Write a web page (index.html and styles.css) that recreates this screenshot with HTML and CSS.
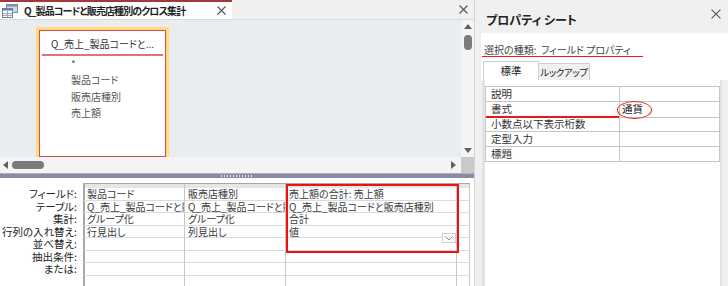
FILE: index.html
```html
<!DOCTYPE html>
<html lang="ja">
<head>
<meta charset="utf-8">
<title>クロス集計</title>
<link rel="stylesheet" href="styles.css">
</head>
<body>
<div class="app">
  <div class="left">
    <div class="tabbar">
      <div class="tab">
        <svg class="qicon" viewBox="0 0 16 14" width="16" height="14">
          <rect x="4.5" y="0.5" width="11" height="8" fill="#c9d5e2" stroke="#7d8fa3"/>
          <rect x="4.5" y="0.5" width="11" height="2" fill="#7d8fa3"/>
          <rect x="0.5" y="4.5" width="10" height="9" fill="#fff" stroke="#6f8297"/>
          <rect x="0.5" y="4.5" width="10" height="2" fill="#5f7fa3"/>
          <path d="M1 9.5H10M1 11.5H10M5.5 7V13" stroke="#9aa9b9" stroke-width="1"/>
        </svg>
        <span class="tab-title">Q_製品コードと販売店種別のクロス集計</span>
        <svg class="x" viewBox="0 0 9 9"><path d="M0.5 0.5L8.5 8.5M8.5 0.5L0.5 8.5" stroke="#555" stroke-width="1.1"/></svg>
      </div>
      <div class="tabbar-fill"></div>
      <svg class="x x-pane" viewBox="0 0 9 9"><path d="M0.5 0.5L8.5 8.5M8.5 0.5L0.5 8.5" stroke="#555" stroke-width="1.1"/></svg>
    </div>

    <div class="designer">
      <div class="canvas">
        <div class="fieldlist">
          <div class="fl-inner">
            <div class="fl-title">Q_売上_製品コードと...</div>
            <div class="fl-rule"></div>
            <ul class="fl-fields">
              <li>*</li>
              <li>製品コード</li>
              <li>販売店種別</li>
              <li>売上額</li>
            </ul>
          </div>
        </div>
      </div>
      <div class="vscroll">
        <svg class="arr-v" viewBox="0 0 8 5"><polygon points="0,5 4,0 8,5" fill="#606060"/></svg>
        <div class="vthumb"></div>
        <div class="fill"></div>
        <svg class="arr-v" viewBox="0 0 8 5"><polygon points="0,0 8,0 4,5" fill="#606060"/></svg>
      </div>
    </div>

    <div class="hscroll">
      <div class="htrack">
        <svg class="arr-h" viewBox="0 0 5 8"><polygon points="5,0 5,8 0,4" fill="#606060"/></svg>
        <div class="hthumb"></div>
        <div class="fill"></div>
        <svg class="arr-h" viewBox="0 0 5 8"><polygon points="0,0 5,4 0,8" fill="#606060"/></svg>
      </div>
      <div class="corner"></div>
    </div>

    <div class="splitter"><div class="grip"></div></div>

    <div class="qbe">
      <div class="qgrid">
        <div></div><div class="hd c1h"></div><div class="hd"></div><div class="hd"></div><div class="hd"></div>

        <div class="lbl">フィールド:</div><div class="c c1">製品コード</div><div class="c">販売店種別</div><div class="c">売上額の合計: 売上額</div><div class="c"></div>
        <div class="lbl">テーブル:</div><div class="c c1">Q_売上_製品コードと販売店種別</div><div class="c">Q_売上_製品コードと販売店種別</div><div class="c">Q_売上_製品コードと販売店種別</div><div class="c"></div>
        <div class="lbl">集計:</div><div class="c c1">グループ化</div><div class="c">グループ化</div><div class="c">合計</div><div class="c"></div>
        <div class="lbl">行列の入れ替え:</div><div class="c c1">行見出し</div><div class="c">列見出し</div><div class="c">値</div><div class="c"></div>
        <div class="lbl">並べ替え:</div><div class="c c1"></div><div class="c"></div><div class="c"></div><div class="c"></div>
        <div class="lbl">抽出条件:</div><div class="c c1"></div><div class="c"></div><div class="c"></div><div class="c"></div>
        <div class="lbl">または:</div><div class="c c1"></div><div class="c"></div><div class="c"></div><div class="c"></div>
        <div class="lbl"></div><div class="c c1"></div><div class="c"></div><div class="c"></div><div class="c"></div>

        <div class="dd"><svg viewBox="0 0 8 5" width="8" height="5"><path d="M0.5 0.5L4 4L7.5 0.5" fill="none" stroke="#8a8a8a" stroke-width="1"/></svg></div>
        <div class="highlight"></div>
      </div>
    </div>
  </div>

  <div class="right">
    <div class="ps-head">
      <span class="ps-title">プロパティ シート</span>
      <svg class="x x-ps" viewBox="0 0 9 9"><path d="M0.5 0.5L8.5 8.5M8.5 0.5L0.5 8.5" stroke="#555" stroke-width="1"/></svg>
    </div>
    <div class="ps-sel"><span class="ps-sel-text">選択の種類:&nbsp; フィールド プロパティ</span></div>
    <div class="ps-tabs">
      <div class="ps-tab active">標準</div>
      <div class="ps-tab inactive">ルックアップ</div>
    </div>
    <div class="ps-page">
      <div class="ps-grid">
        <div class="ps-row"><div class="ps-k">説明</div><div class="ps-v"></div></div>
        <div class="ps-row"><div class="ps-k mark">書式</div><div class="ps-v">通貨<span class="ring"></span></div></div>
        <div class="ps-row"><div class="ps-k">小数点以下表示桁数</div><div class="ps-v"></div></div>
        <div class="ps-row"><div class="ps-k">定型入力</div><div class="ps-v"></div></div>
        <div class="ps-row"><div class="ps-k">標題</div><div class="ps-v"></div></div>
      </div>
    </div>
  </div>
</div>
</body>
</html>
```

FILE: styles.css
```css
* { box-sizing: border-box; margin: 0; padding: 0; }
html, body { width: 728px; height: 286px; overflow: hidden; }
body {
  font-family: "Noto Sans CJK JP", "Noto Sans", sans-serif;
  font-feature-settings: "palt" 1;
  color: #333;
  background: #f0f0f0;
}
.app { display: flex; width: 728px; height: 286px; }

/* ---------- left pane ---------- */
.left { width: 474px; display: flex; flex-direction: column; }

.tabbar {
  height: 20px; display: flex; align-items: stretch;
  background: #f0f0f0; border-bottom: 1px solid #d9d9d9;
}
.tab {
  width: 232px; background: #fff; border-top: 2px solid #a4373a;
  display: flex; align-items: center; padding-left: 2px;
}
.qicon { width: 16px; height: 14px; flex: none; }
.tab-title {
  flex: 1; margin-left: 6px; font-size: 10px; font-weight: 700; color: #222;
  letter-spacing: -0.9px; white-space: nowrap; line-height: 14px;
}
.x { width: 9px; height: 9px; flex: none; }
.tab .x { margin-right: 6px; }
.tabbar-fill { flex: 1; }
.x-pane { align-self: center; margin-right: 6px; }

.designer { height: 137px; display: flex; }
.canvas {
  flex: 1; background: #e9edf0; padding: 7px 0 0 36px; overflow: hidden;
}
.fieldlist { width: 133px; height: 133px; border: 3px solid #fcdc7e; }
.fl-inner {
  height: 100%; border: 1px solid #d64b4b; background: #fff; padding: 0 1px;
}
.fl-title {
  padding-top: 6px; line-height: 14px; font-size: 10px; text-align: center;
  color: #333; white-space: nowrap;
}
.fl-rule { height: 2px; margin: 3px 1px 0; background: #e07474; }
.fl-fields {
  list-style: none; padding-left: 30px; font-size: 10px; line-height: 16.3px; color: #555;
}

.vscroll {
  width: 13px; background: #f4f4f4; display: flex; flex-direction: column;
  align-items: center; padding: 4px 0;
}
.arr-v { width: 8px; height: 5px; flex: none; }
.vthumb { width: 8px; height: 15px; border-radius: 4px; background: #7a7a7a; margin-top: 6px; }
.fill { flex: 1; }

.hscroll { height: 16px; display: flex; }
.htrack {
  flex: 1; background: #f4f4f4; display: flex; align-items: center; padding: 0 5px 0 3px;
}
.arr-h { width: 5px; height: 8px; flex: none; }
.hthumb { width: 32px; height: 8px; border-radius: 4px; background: #7a7a7a; margin-left: 4px; }
.corner { width: 13px; background: #c9c9c9; }

.splitter {
  height: 5px; background: #8b8ba6; border-top: 1px solid #b0b0c4;
  display: flex; justify-content: center; align-items: center;
}
.grip {
  width: 33px; height: 2px;
  background: repeating-linear-gradient(90deg, #e4e4ee 0 1px, transparent 1px 3px);
}

.qbe { flex: 1; background: #fff; padding-top: 5px; overflow: hidden; }
.qgrid {
  position: relative; display: grid;
  grid-template-columns: 83px 102px 101px 171px 13px;
  grid-template-rows: 5px repeat(8, 12.5px);
  font-size: 10.5px;
}
.hd { border-top: 1px solid #a6a6a6; background: #e6e6e6; border-right: 1px solid #c4c4c4; }
.c1h { border-left: 2px solid #a8a8a8; }
.lbl {
  text-align: right; padding-right: 6px; color: #222; line-height: 11.5px; white-space: nowrap;
}
.c {
  border-right: 1px solid #c6c6c6; border-bottom: 1px solid #d6dbe6;
  padding-left: 3px; font-size: 10px; line-height: 11.5px; white-space: nowrap;
  overflow-x: clip; overflow-y: visible; color: #3a3a3a;
}
.c1 { border-left: 2px solid #a8a8a8; padding-left: 2px; }
.dd {
  position: absolute; left: 442px; top: 50px; width: 14px; height: 10px;
  border: 1px solid #cfcfcf; background: #fafafa;
  display: flex; align-items: center; justify-content: center;
}
.highlight {
  position: absolute; left: 286px; top: 1px; width: 173px; height: 69px;
  border: 2px solid #f01010;
}

/* ---------- property sheet ---------- */
.right {
  flex: 1; background: #f0f0f0; border-left: 1px solid #d4d4d4;
  display: flex; flex-direction: column; padding-left: 6px;
}
.ps-head { height: 33px; display: flex; }
.ps-title {
  flex: 1; padding: 12px 0 0 5px; font-size: 12px; font-weight: 700; line-height: 16px; color: #222;
  white-space: nowrap;
}
.x-ps { width: 10px; height: 10px; margin: 9px 7px 0 0; }

.ps-sel { height: 28px; background: #fff; padding: 2px 0 0 1px; }
.ps-sel-text {
  display: inline-block; font-size: 10px; line-height: 12px; color: #444;
  padding: 0 12px 0 2px; border-bottom: 1.5px solid #ee1c1c; white-space: nowrap;
}

.ps-tabs { height: 19px; background: #fff; display: flex; align-items: flex-end; padding-left: 2px; }
.ps-tab {
  font-size: 10.5px; line-height: 16px; border: 1px solid #cfcfcf; border-bottom: none;
  text-align: center; color: #222; white-space: nowrap;
}
.ps-tab.active { width: 56px; height: 19px; background: #fff; padding-top: 1px; }
.ps-tab.inactive {
  width: 51px; height: 17px; background: #f0f0f0; border-left: none;
  font-size: 9.5px; letter-spacing: -0.4px;
}

.ps-page {
  flex: 1; margin-left: 1px; width: 240px; background: #fff;
  border-left: 3px solid #e3e3e3; border-right: 2px solid #e3e3e3; padding-top: 6px;
}
.ps-grid { border-top: 1px solid #c6c6c6; border-left: 1px solid #c6c6c6; border-right: 1px solid #c6c6c6; }
.ps-row { display: grid; grid-template-columns: 134px 1fr; height: 15px; }
.ps-k {
  border-right: 1px solid #c6c6c6; border-bottom: 1px solid #c6c6c6;
  padding-left: 5px; font-size: 10.5px; line-height: 14px; color: #333; white-space: nowrap;
}
.ps-k.mark { border-bottom: 2px solid #e81818; }
.ps-v {
  position: relative; border-bottom: 1px solid #c6c6c6; padding-left: 2px;
  font-size: 10.5px; line-height: 14px; color: #222;
}
.ring {
  position: absolute; left: -3px; top: -1px; width: 35px; height: 18px;
  border: 1.5px solid #e81818; border-radius: 50%;
}
```
